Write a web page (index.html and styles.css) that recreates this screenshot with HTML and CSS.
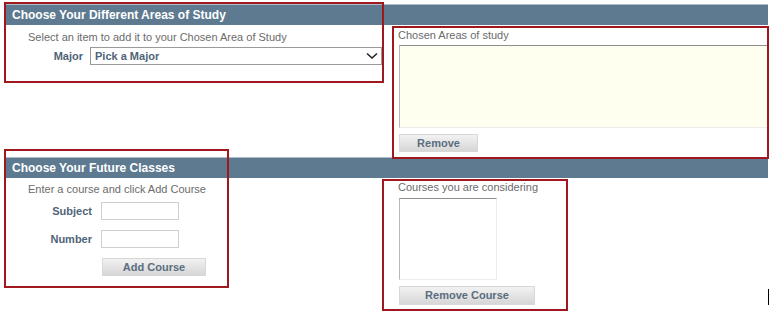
FILE: index.html
```html
<!DOCTYPE html>
<html>

<head lang="en">
    <meta charset="UTF-8">
    <title>Plan your studies</title>
    <link rel="stylesheet" href="styles.css">
</head>

<body>
    <div class="page">
        <!-- areas of study -->
        <div class="section-title">Choose Your Different Areas of Study</div>
        <div class="section-body">
            <div class="left-col">
                <div class="hint">Select an item to add it to your Chosen Area of Study</div>
                <div class="form-row major-row">
                    <label class="field-label major-label">Major</label>
                    <div class="select-box">
                        <span>Pick a Major</span>
                        <svg width="12" height="8" viewBox="0 0 12 8"><path d="M1 1.5 L6 6 L11 1.5" fill="none" stroke="#222" stroke-width="1.6"/></svg>
                    </div>
                </div>
            </div>
            <div class="right-col areas-col">
                <div class="list-title">Chosen Areas of study</div>
                <div class="list-box areas-list"></div>
                <div class="btn btn-remove">Remove</div>
            </div>
        </div>

        <!-- future classes -->
        <div class="section-title">Choose Your Future Classes</div>
        <div class="section-body">
            <div class="left-col">
                <div class="hint hint-course">Enter a course and click Add Course</div>
                <div class="form-row course-row">
                    <label class="field-label">Subject</label>
                    <input type="text" class="text-input">
                </div>
                <div class="form-row course-row">
                    <label class="field-label">Number</label>
                    <input type="text" class="text-input">
                </div>
                <div class="btn btn-add">Add Course</div>
            </div>
            <div class="right-col courses-col">
                <div class="list-title">Courses you are considering</div>
                <div class="list-box courses-list"></div>
                <div class="btn btn-remove-course">Remove Course</div>
            </div>
        </div>

        <!-- 红色标注框 -->
        <div class="mark mark-1"></div>
        <div class="mark mark-2"></div>
        <div class="mark mark-3"></div>
        <div class="mark mark-4"></div>
        <div class="caret"></div>
    </div>
</body>

</html>
```

FILE: styles.css
```css
* {
    padding: 0px;
    margin: 0px;
    box-sizing: border-box;
}

body {
    background: #ffffff;
    font-family: "Liberation Sans", Arial, sans-serif;
    font-size: 11px;
    color: #6b6b6b;
}

.page {
    position: relative;
    width: 773px;
    height: 315px;
    padding: 4px 5px 0px 6px;
}

/* 标题栏 */
.section-title {
    height: 21px;
    line-height: 20px;
    padding-left: 6px;
    border-top: 1px solid #aebbc6;
    background: #5e7a91;
    color: #ffffff;
    font-size: 12px;
    font-weight: bold;
}

.section-body {
    display: flex;
}

.section-body:nth-child(2) {
    height: 132px;
}

.left-col {
    width: 387px;
}

.right-col {
    flex: 1;
    padding-left: 5px;
}

.hint {
    padding-left: 22px;
    height: 14px;
    line-height: 14px;
    margin-top: 5px;
}

.hint-course {
    margin-top: 4px;
}

.form-row {
    display: flex;
    align-items: center;
}

.field-label {
    font-weight: bold;
    color: #4f6478;
    text-align: right;
    font-size: 11px;
}

/* 专业下拉框 */
.major-row {
    margin-top: 3px;
}

.major-label {
    width: 77px;
    margin-right: 7px;
}

.select-box {
    width: 292px;
    height: 18px;
    border: 1px solid #9a9a9a;
    display: flex;
    align-items: center;
    justify-content: space-between;
    padding: 0px 3px 0px 4px;
    font-weight: bold;
    color: #4f6478;
}

/* 右侧列表 */
.list-title {
    height: 14px;
    line-height: 14px;
    margin-top: 3px;
}

.list-box {
    border-top: 1px solid #8e8e8e;
    border-left: 1px solid #b8b8b8;
    border-bottom: 1px solid #ececec;
    border-right: 1px solid #ececec;
    margin: 3px 0px 0px 1px;
}

.areas-list {
    height: 83px;
    background: #fffff0;
}

.courses-col .list-title {
    margin-top: 2px;
}

.courses-list {
    width: 98px;
    height: 82px;
    margin-top: 4px;
    background: #ffffff;
}

/* 按钮 */
.btn {
    height: 18px;
    line-height: 16px;
    text-align: center;
    font-size: 11px;
    font-weight: bold;
    color: #5a6e80;
    border: 1px solid #d8d8d8;
    background: linear-gradient(#f2f2f2, #d6d6d6);
}

.btn-remove {
    width: 79px;
    margin: 6px 0px 0px 1px;
}

.btn-add {
    width: 104px;
    margin: 10px 0px 0px 96px;
}

.btn-remove-course {
    width: 136px;
    height: 19px;
    line-height: 17px;
    margin: 6px 0px 0px 1px;
}

/* 课程输入 */
.course-row {
    margin-top: 6px;
}

.course-row + .course-row {
    margin-top: 10px;
}

.course-row .field-label {
    width: 86px;
    margin-right: 9px;
}

.text-input {
    width: 78px;
    height: 18px;
    border: 1px solid #cfcfcf;
    outline: none;
}

/* 红色标注框 */
.mark {
    position: absolute;
    border: 2px solid #a0171d;
}

.mark-1 {
    left: 4px;
    top: 2px;
    width: 380px;
    height: 81px;
}

.mark-2 {
    left: 392px;
    top: 26px;
    width: 377px;
    height: 133px;
}

.mark-3 {
    left: 4px;
    top: 149px;
    width: 225px;
    height: 139px;
}

.mark-4 {
    left: 382px;
    top: 179px;
    width: 186px;
    height: 132px;
}

.caret {
    position: absolute;
    left: 768px;
    top: 289px;
    width: 1px;
    height: 16px;
    background: #000000;
}
```
